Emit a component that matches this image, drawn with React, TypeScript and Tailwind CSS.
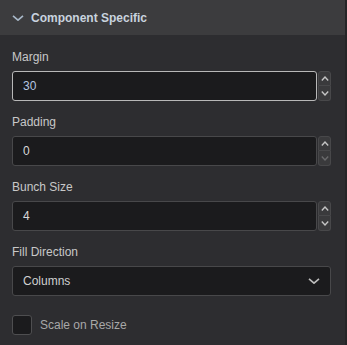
import React from "react";

const font = { fontFamily: '"Liberation Sans", Arial, sans-serif' };

function Chevron({ className = "" }: { className?: string }) {
  return (
    <svg viewBox="0 0 12 6" className={className} fill="none">
      <path d="M1 0.8 L6 5.2 L11 0.8" stroke="currentColor" strokeWidth="1.6" />
    </svg>
  );
}

function Spin({ dimDown = false }: { dimDown?: boolean }) {
  return (
    <div className="ml-px flex w-[13px] flex-col gap-0">
      <div className="flex h-[15px] items-center justify-center rounded-t-[3px] border border-[#48484a] bg-[#3a3a3c] text-[#c4c4c4]">
        <svg viewBox="0 0 8 5" className="h-[5px] w-[8px]" fill="none">
          <path d="M0.8 4.4 L4 1 L7.2 4.4" stroke="currentColor" strokeWidth="1.4" />
        </svg>
      </div>
      <div
        className={`flex h-[15px] items-center justify-center rounded-b-[3px] border border-t-0 border-[#48484a] bg-[#3a3a3c] ${
          dimDown ? "text-[#6a6a6c]" : "text-[#c4c4c4]"
        }`}
      >
        <svg viewBox="0 0 8 5" className="h-[5px] w-[8px]" fill="none">
          <path d="M0.8 0.6 L4 4 L7.2 0.6" stroke="currentColor" strokeWidth="1.4" />
        </svg>
      </div>
    </div>
  );
}

function NumberField({
  label,
  value,
  focused = false,
  dimDown = false,
}: {
  label: string;
  value: string;
  focused?: boolean;
  dimDown?: boolean;
}) {
  return (
    <div className="flex flex-col">
      <div className="h-4 text-[12px] leading-4 text-[#c8c8c8]">{label}</div>
      <div className="mt-1.5 flex h-[30px]">
        <div
          className={`flex flex-1 items-center rounded-[3px] border bg-[#1b1b1d] pl-[10px] text-[12px] ${
            focused
              ? "border-[#b8b8b8] text-[#b4c6e0]"
              : "border-[#48484a] text-[#d8d8d8]"
          }`}
        >
          {value}
        </div>
        <Spin dimDown={dimDown} />
      </div>
    </div>
  );
}

export default function App() {
  return (
    <div
      className="h-[345px] w-[347px] border-r-2 border-[#252527] bg-[#2d2d30]"
      style={font}
    >
      <div className="flex h-[35px] items-center gap-[7px] bg-[#3c3c3e] pl-3">
        <Chevron className="h-[6px] w-[12px] text-[#a8b8c8]" />
        <span className="text-[12px] font-bold text-[#c9d3de]">
          Component Specific
        </span>
      </div>
      <div className="flex flex-col gap-[13px] pl-3 pr-[14px] pt-[14px]">
        <NumberField label="Margin" value="30" focused />
        <NumberField label="Padding" value="0" dimDown />
        <NumberField label="Bunch Size" value="4" />
        <div className="flex flex-col">
          <div className="h-4 text-[12px] leading-4 text-[#c8c8c8]">
            Fill Direction
          </div>
          <div className="mt-1.5 flex h-[30px] items-center justify-between rounded-[3px] border border-[#48484a] bg-[#1b1b1d] pl-[10px] pr-[10px] text-[12px] text-[#d0d0d0]">
            <span>Columns</span>
            <Chevron className="h-[6px] w-[12px] text-[#bdbdbd]" />
          </div>
        </div>
        <div className="mt-[6px] flex items-center gap-2">
          <div className="h-5 w-5 rounded-[3px] border border-[#4e4e50] bg-[#1b1b1d]" />
          <span className="text-[12px] text-[#a8a8a8]">Scale on Resize</span>
        </div>
      </div>
    </div>
  );
}
